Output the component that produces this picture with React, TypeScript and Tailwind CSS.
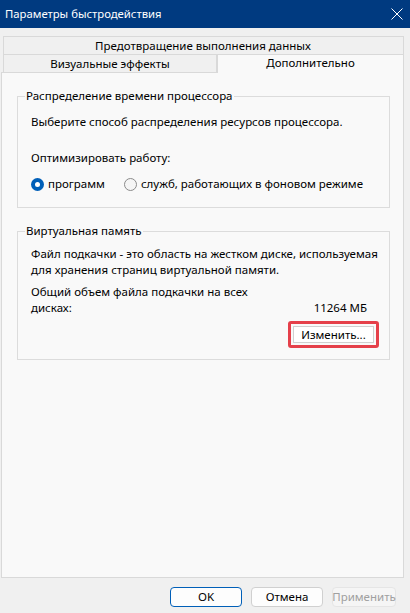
import React from 'react';

const font = { fontFamily: '"Segoe UI", "Noto Sans", "Liberation Sans", sans-serif' };

function Radio({ checked, label }: { checked?: boolean; label: string }) {
  return (
    <label className="flex items-center gap-[4px]">
      {checked ? (
        <span className="flex h-[13px] w-[13px] items-center justify-center rounded-full bg-[#005fb8]">
          <span className="h-[5px] w-[5px] rounded-full bg-white" />
        </span>
      ) : (
        <span className="h-[13px] w-[13px] rounded-full border border-[#8b8b8b] bg-[#f5f5f5]" />
      )}
      <span>{label}</span>
    </label>
  );
}

function Button({ children, primary, disabled, width }: { children: React.ReactNode; primary?: boolean; disabled?: boolean; width: string }) {
  return (
    <button
      type="button"
      className={`flex h-[20px] items-center justify-center rounded-[4px] border ${width} ${
        primary
          ? 'border-[#005fb8] bg-[#fdfdfd] text-black'
          : disabled
          ? 'border-[#e5e5e5] bg-[#f5f5f5] text-[#a0a0a0]'
          : 'border-[#d0d0d0] bg-[#fdfdfd] text-black'
      }`}
    >
      {children}
    </button>
  );
}

export default function App() {
  return (
    <div className="flex h-[613px] w-[410px] flex-col whitespace-nowrap bg-[#f0f0f0] text-[11.5px] leading-[16px] text-black" style={font}>
      {/* title bar */}
      <div className="flex h-[28px] items-center justify-between bg-[#003a80] pl-[5px] pr-[8px] text-[11.3px] text-white">
        <span>Параметры быстродействия</span>
        <svg width="12" height="12" viewBox="0 0 12 12" className="mr-[-1px]">
          <path d="M0.5 0.5 L11.5 11.5 M11.5 0.5 L0.5 11.5" stroke="white" strokeWidth="1" />
        </svg>
      </div>

      {/* tabs */}
      <div className="ml-[3px] mt-[8px] w-[401px]">
        <div className="flex h-[18px] items-center justify-center border border-b-0 border-[#d9d9d9] bg-[#f0f0f0] pr-[1px]">
          Предотвращение выполнения данных
        </div>
        <div className="relative z-10 -mb-[1px] flex h-[19px]">
          <div className="flex w-[214px] items-center justify-center border border-[#d9d9d9] bg-[#f0f0f0]">
            Визуальные эффекты
          </div>
          <div className="flex flex-1 items-center justify-center border-x border-t border-[#d9d9d9] bg-[#f9f9f9] pb-[2px]">
            Дополнительно
          </div>
        </div>
      </div>

      {/* panel */}
      <div className="ml-[1px] flex h-[506px] w-[403px] flex-col border border-[#d9d9d9] bg-[#f9f9f9] pl-[15px] pr-[13px] pt-[15px]">
        <fieldset className="border border-[#dcdcdc] pb-[15px] pl-[13px]">
          <legend className="-ml-[6px] px-[1px]">Распределение времени процессора</legend>
          <p className="mt-[10px]">Выберите способ распределения ресурсов процессора.</p>
          <p className="mt-[20px]">Оптимизировать работу:</p>
          <div className="mt-[10px] flex gap-[19px]">
            <Radio checked label="программ" />
            <Radio label="служб, работающих в фоновом режиме" />
          </div>
        </fieldset>

        <fieldset className="mt-[15px] border border-[#dcdcdc] pb-[11px] pl-[13px] pr-[10px]">
          <legend className="-ml-[6px] px-[1px]">Виртуальная память</legend>
          <p className="mt-[7px]">
            Файл подкачки - это область на жестком диске, используемая
            <br />
            для хранения страниц виртуальной памяти.
          </p>
          <div className="mt-[6px] flex items-end justify-between pr-[12px]">
            <p>
              Общий объем файла подкачки на всех
              <br />
              дисках:
            </p>
            <span>11264 МБ</span>
          </div>
          <div className="mt-[5px] flex justify-end">
            <div className="rounded-[3px] border-[3px] border-[#e5404a] p-[2px]">
              <button type="button" className="flex h-[17px] w-[81px] items-center justify-center border border-[#d0d0d0] bg-white">
                Изменить...
              </button>
            </div>
          </div>
        </fieldset>
      </div>

      {/* footer */}
      <div className="mt-[9px] flex justify-end gap-[9px] pr-[14px]">
        <Button primary width="w-[72px]">OK</Button>
        <Button width="w-[72px]">Отмена</Button>
        <Button disabled width="w-[64px]">Применить</Button>
      </div>
    </div>
  );
}
